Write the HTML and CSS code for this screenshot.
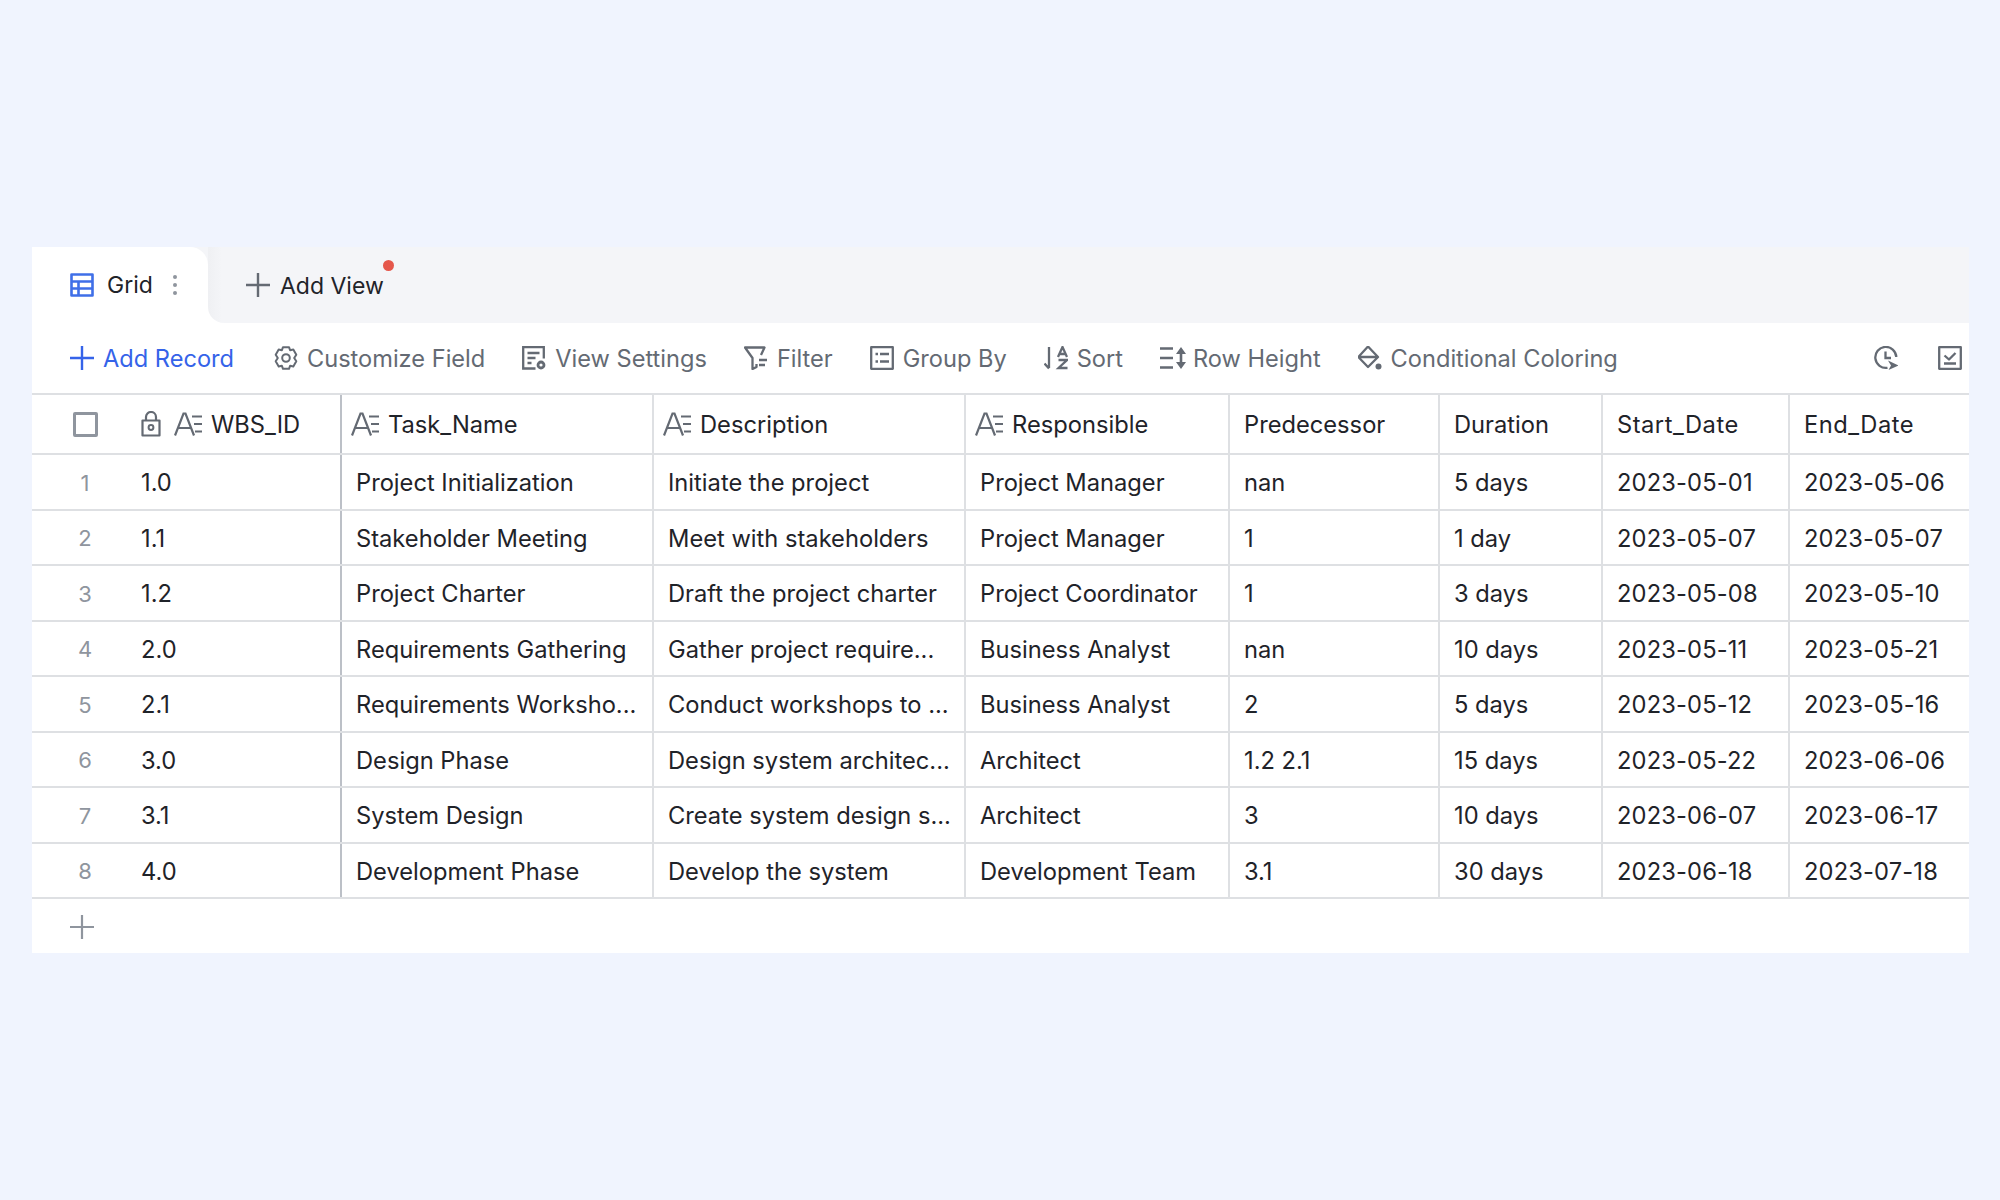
FILE: index.html
```html
<!DOCTYPE html>
<html lang="en">
  <head>
    <meta charset="UTF-8" />
    <meta name="viewport" content="width=device-width, initial-scale=1.0" />
    <title>Grid</title>
    <link rel="stylesheet" href="styles.css">
  </head>
  <body>
    <svg class="defs" aria-hidden="true">
      <symbol id="i-text" viewBox="0 0 28 24">
        <path d="M1 23.500 9.500 1.500h2l8.500 22M4.500 16h13" fill="none" stroke="currentColor" stroke-width="2.200"/>
        <path d="M18 4.500h10M20 12h8M21 19.500h7" fill="none" stroke="currentColor" stroke-width="2.200"/>
      </symbol>
    </svg>

    <div class="panel">
      <!-- tabs -->
      <div class="tabs">
        <div class="tab">
          <svg class="ico ico-blue" viewBox="0 0 24 24"><path d="M1.500 1.500h21v21h-21zM1.500 8.500h21M1.500 15.500h21M8.500 8.500V22.500" fill="none" stroke="currentColor" stroke-width="2.600" stroke-linejoin="round"/></svg>
          <span>Grid</span>
          <i class="dots"></i>
        </div>
        <div class="tab-rest">
          <div class="add-view">
            <svg class="ico ico-dark" viewBox="0 0 24 24"><path d="M12 0v24M0 12h24" fill="none" stroke="currentColor" stroke-width="2.400"/></svg>
            <span>Add View</span>
            <i class="red-dot"></i>
          </div>
        </div>
      </div>

      <!-- toolbar -->
      <div class="toolbar">
        <div class="tool tool-blue">
          <svg class="ico" viewBox="0 0 24 24"><path d="M12 0v24M0 12h24" fill="none" stroke="currentColor" stroke-width="2.400"/></svg>
          <span>Add Record</span>
        </div>
        <div class="tool">
          <svg class="ico" viewBox="0 0 24 24"><path d="M9 1.200h6L16.100 4.200 19.300 3.500 22.300 8.700 20.200 12 22.300 15.300 19.300 20.500 16.100 19.800 15 22.800H9L7.900 19.800 4.700 20.500 1.700 15.300 3.800 12 1.700 8.700 4.700 3.500 7.900 4.200z" fill="none" stroke="currentColor" stroke-width="2" stroke-linejoin="round"/><circle cx="12" cy="12" r="3.800" fill="none" stroke="currentColor" stroke-width="2"/></svg>
          <span>Customize Field</span>
        </div>
        <div class="tool">
          <svg class="ico" viewBox="0 0 24 24"><path d="M13.500 22.500H1.200V1.200h20.600V12.500M5.500 7h12M5.500 12h8M5.500 17h4" fill="none" stroke="currentColor" stroke-width="2.300"/><circle cx="19" cy="19" r="3" fill="none" stroke="currentColor" stroke-width="2.800"/></svg>
          <span>View Settings</span>
        </div>
        <div class="tool">
          <svg class="ico" viewBox="0 0 24 24"><path d="M17 9 20.500 1.500H1L8.500 12v11l4-2v-3M15 14h8M15 19h6" fill="none" stroke="currentColor" stroke-width="2.300" stroke-linejoin="round"/></svg>
          <span>Filter</span>
        </div>
        <div class="tool">
          <svg class="ico" viewBox="0 0 24 24"><path d="M1.200 1.200h21.600v21.600H1.200zM10 8h9M10 15.500h9" fill="none" stroke="currentColor" stroke-width="2.300" stroke-linejoin="round"/><path d="M5.500 8h2.500M5.500 15.500h2.500" fill="none" stroke="currentColor" stroke-width="2.600"/></svg>
          <span>Group By</span>
        </div>
        <div class="tool">
          <svg class="ico" viewBox="0 0 24 24"><path d="M5 1v21M.5 17.500 5 22.500M14 11l4.500-10 4.500 10M15.500 8h6M14.500 14h8.500L14.500 22H23.500" fill="none" stroke="currentColor" stroke-width="2.300"/></svg>
          <span>Sort</span>
        </div>
        <div class="tool tool-row">
          <svg class="ico ico-wide" viewBox="0 0 26 24"><path d="M0 2.500h13M0 12h13M0 21.500h13M21 4v16" fill="none" stroke="currentColor" stroke-width="2.600"/><path d="M16 8l5-7 5 7zM16 16l5 7 5-7z" fill="currentColor"/></svg>
          <span>Row Height</span>
        </div>
        <div class="tool">
          <svg class="ico" viewBox="0.5 0 24 24"><path d="M10.500 .5 20.500 11l-10 10L.8 11 10.500 .5ZM1.500 11h18.500" fill="none" stroke="currentColor" stroke-width="2.300" stroke-linejoin="round"/><circle cx="21" cy="20.500" r="3" fill="currentColor"/></svg>
          <span>Conditional Coloring</span>
        </div>
        <div class="tool-right">
          <svg class="ico" viewBox="0 0 24 24"><path d="M13.500 21.800A10.500 10.500 0 1 1 22.300 11M11.500 5.500V12h5.500" fill="none" stroke="currentColor" stroke-width="2.300"/><path d="M14 14.500 24.500 19.500 14.500 24l2.500-4.500z" fill="currentColor"/></svg>
          <svg class="ico" viewBox="0 0 24 24"><path d="M1.200 1.200h21.600v21.600H1.200zM6.500 9.500l4.500 4 6.500-6.500M6 17.500h12" fill="none" stroke="currentColor" stroke-width="2.300" stroke-linejoin="round"/></svg>
        </div>
      </div>

      <!-- table -->
      <div class="row row-head">
        <div class="cell cell-first">
          <span class="num"><i class="check"></i></span>
          <svg class="lock" viewBox="0 0 20 26"><path d="M1.500 9.500h17v15h-17zM5 9.500V6a5 5 0 0 1 10 0v3.500" fill="none" stroke="currentColor" stroke-width="2.200" stroke-linejoin="round"/><circle cx="10" cy="16.500" r="2.400" fill="none" stroke="currentColor" stroke-width="2"/></svg>
          <svg class="fld"><use href="#i-text"/></svg>
          <span>WBS_ID</span>
        </div>
        <div class="cell cell-icon"><svg class="fld"><use href="#i-text"/></svg><span>Task_Name</span></div>
        <div class="cell cell-icon"><svg class="fld"><use href="#i-text"/></svg><span>Description</span></div>
        <div class="cell cell-icon"><svg class="fld"><use href="#i-text"/></svg><span>Responsible</span></div>
        <div class="cell">Predecessor</div>
        <div class="cell">Duration</div>
        <div class="cell cell-wide">Start_Date</div>
        <div class="cell cell-wide">End_Date</div>
      </div>

      <div class="row">
        <div class="cell cell-first"><span class="num">1</span>1.0</div>
        <div class="cell">Project Initialization</div>
        <div class="cell">Initiate the project</div>
        <div class="cell">Project Manager</div>
        <div class="cell">nan</div>
        <div class="cell">5 days</div>
        <div class="cell cell-date">2023-05-01</div>
        <div class="cell cell-date">2023-05-06</div>
      </div>
      <div class="row">
        <div class="cell cell-first"><span class="num">2</span>1.1</div>
        <div class="cell">Stakeholder Meeting</div>
        <div class="cell">Meet with stakeholders</div>
        <div class="cell">Project Manager</div>
        <div class="cell">1</div>
        <div class="cell">1 day</div>
        <div class="cell cell-date">2023-05-07</div>
        <div class="cell cell-date">2023-05-07</div>
      </div>
      <div class="row">
        <div class="cell cell-first"><span class="num">3</span>1.2</div>
        <div class="cell">Project Charter</div>
        <div class="cell">Draft the project charter</div>
        <div class="cell">Project Coordinator</div>
        <div class="cell">1</div>
        <div class="cell">3 days</div>
        <div class="cell cell-date">2023-05-08</div>
        <div class="cell cell-date">2023-05-10</div>
      </div>
      <div class="row">
        <div class="cell cell-first"><span class="num">4</span>2.0</div>
        <div class="cell">Requirements Gathering</div>
        <div class="cell">Gather project require...</div>
        <div class="cell">Business Analyst</div>
        <div class="cell">nan</div>
        <div class="cell">10 days</div>
        <div class="cell cell-date">2023-05-11</div>
        <div class="cell cell-date">2023-05-21</div>
      </div>
      <div class="row">
        <div class="cell cell-first"><span class="num">5</span>2.1</div>
        <div class="cell">Requirements Worksho...</div>
        <div class="cell">Conduct workshops to ...</div>
        <div class="cell">Business Analyst</div>
        <div class="cell">2</div>
        <div class="cell">5 days</div>
        <div class="cell cell-date">2023-05-12</div>
        <div class="cell cell-date">2023-05-16</div>
      </div>
      <div class="row">
        <div class="cell cell-first"><span class="num">6</span>3.0</div>
        <div class="cell">Design Phase</div>
        <div class="cell">Design system architec...</div>
        <div class="cell">Architect</div>
        <div class="cell">1.2 2.1</div>
        <div class="cell">15 days</div>
        <div class="cell cell-date">2023-05-22</div>
        <div class="cell cell-date">2023-06-06</div>
      </div>
      <div class="row">
        <div class="cell cell-first"><span class="num">7</span>3.1</div>
        <div class="cell">System Design</div>
        <div class="cell">Create system design s...</div>
        <div class="cell">Architect</div>
        <div class="cell">3</div>
        <div class="cell">10 days</div>
        <div class="cell cell-date">2023-06-07</div>
        <div class="cell cell-date">2023-06-17</div>
      </div>
      <div class="row">
        <div class="cell cell-first"><span class="num">8</span>4.0</div>
        <div class="cell">Development Phase</div>
        <div class="cell">Develop the system</div>
        <div class="cell">Development Team</div>
        <div class="cell">3.1</div>
        <div class="cell">30 days</div>
        <div class="cell cell-date">2023-06-18</div>
        <div class="cell cell-date">2023-07-18</div>
      </div>

      <div class="add-row">
        <svg class="ico" viewBox="0 0 24 24"><path d="M12 0v24M0 12h24" fill="none" stroke="currentColor" stroke-width="2.200"/></svg>
      </div>
    </div>
  </body>
</html>
```

FILE: styles.css
```css
* {
  margin: 0;
  padding: 0;
  box-sizing: border-box;
}

body {
  min-height: 1200px;
  padding: 247px 31px 0 32px;
  background-color: #f0f4fe;
  font-family: Inter, "Liberation Sans", sans-serif;
  font-size: 23.7px;
  color: #1f2329;
}

.defs {
  display: none;
}

.panel {
  width: 1937px;
  background-color: #fff;
}

.ico {
  flex: none;
  width: 24px;
  height: 24px;
}

.ico-wide {
  width: 26px;
}

.ico-blue {
  color: #3f6fe8;
}

.ico-dark {
  color: #646a73;
}

/* tabs */
.tabs {
  display: flex;
  height: 76px;
  font-size: 23px;
  background: linear-gradient(#f4f5f8 50%, #fff 50%);
}

.tab {
  display: flex;
  align-items: center;
  width: 176px;
  padding-left: 38px;
  background-color: #fff;
  border-radius: 0 18px 0 0;
}

.tab span {
  margin-left: 13px;
}

.dots {
  width: 4px;
  height: 4px;
  margin-left: 20px;
  border-radius: 50%;
  background-color: #8f959e;
  box-shadow: 0 -8px 0 #8f959e, 0 8px 0 #8f959e;
}

.tab-rest {
  flex: 1;
  padding-left: 38px;
  border-radius: 0 0 0 16px;
  background: linear-gradient(90deg, #eff0f3, #f4f5f8 14px);
}

.add-view {
  position: relative;
  display: inline-flex;
  align-items: center;
  height: 76px;
  gap: 10px;
}

.add-view span {
  padding-top: 2px;
}

.red-dot {
  position: absolute;
  top: 13px;
  right: -10px;
  width: 11px;
  height: 11px;
  border-radius: 50%;
  background-color: #e5574b;
}

/* toolbar */
.toolbar {
  display: flex;
  align-items: center;
  gap: 37px;
  height: 70px;
  padding-left: 38px;
  padding-right: 7px;
  font-size: 23.6px;
  color: #646a73;
}

.tool {
  display: flex;
  align-items: center;
  gap: 9px;
}

.tool-blue {
  margin-right: 3px;
  color: #3563e9;
}

.tool-row {
  gap: 7px;
}

.tool-right {
  display: flex;
  gap: 40px;
  margin-left: auto;
}

/* rows */
.row {
  display: grid;
  grid-template-columns: 310px 312px 312px 264px 210px 163px 187px 179px;
  height: 55.5px;
  border-bottom: 2px solid #dee0e3;
}

.row-head {
  height: 62px;
  border-top: 2px solid #dee0e3;
}

.cell {
  display: flex;
  align-items: center;
  padding: 2px 0 0 14px;
  border-right: 2px solid #dee0e3;
  white-space: nowrap;
  overflow: hidden;
}

.row-head .cell {
  padding-top: 0;
}

.cell:last-child {
  border-right: none;
}

.cell-first {
  padding-left: 0;
  border-right-color: #bcc0c7;
}

.row-head .cell-icon {
  padding-left: 9px;
}

.cell-wide {
  letter-spacing: 0.5px;
}

.cell-date {
  letter-spacing: 0.15px;
}

.num {
  display: flex;
  justify-content: center;
  flex: none;
  width: 106px;
  margin-right: 3px;
  font-size: 22px;
  color: #8f959e;
}

.check {
  width: 25px;
  height: 25px;
  border: 3px solid #8f959e;
  border-radius: 2px;
}

.lock {
  flex: none;
  width: 20px;
  height: 26px;
  margin-right: 13px;
  color: #646a73;
}

.fld {
  flex: none;
  width: 28px;
  height: 24px;
  margin-right: 9px;
  color: #646a73;
}

.add-row {
  display: flex;
  align-items: center;
  height: 54px;
  padding: 2px 0 0 38px;
  color: #8f959e;
}
```
